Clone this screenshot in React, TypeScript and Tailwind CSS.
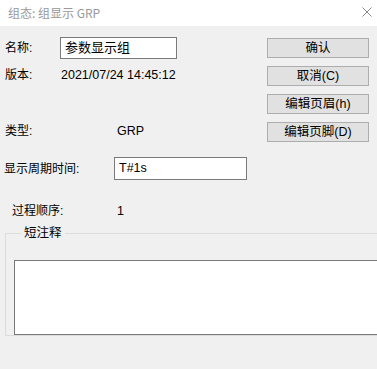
import React from "react";

const font = { fontFamily: '"Liberation Sans", "Noto Sans CJK SC", sans-serif' };

function DlgButton({ label }: { label: string }) {
  return (
    <button className="h-[20px] w-[102px] border border-[#adadad] bg-[#e1e1e1] text-[12.5px] leading-none text-black">
      {label}
    </button>
  );
}

export default function App() {
  return (
    <div
      className="w-[377px] h-[369px] overflow-hidden bg-[#f0f0f0] text-[12px] text-black"
      style={font}
    >
      {/* title bar */}
      <div className="flex h-[26px] items-center justify-between bg-white pl-[8px] pr-[5px]">
        <span className="text-[12px] text-[#999999]" style={{ fontFamily: '"Noto Sans CJK SC", sans-serif' }}>
          组态: 组显示 GRP
        </span>
        <svg width="10" height="10" viewBox="0 0 10 10" className="mb-[2px]">
          <path d="M0.5 0.5 L9.5 9.5 M9.5 0.5 L0.5 9.5" stroke="#8a8a8a" strokeWidth="1" />
        </svg>
      </div>

      <div className="flex">
        {/* left form */}
        <div className="w-[267px]">
          <div className="mt-[11px] flex h-[22px] items-center">
            <span className="w-[60px] shrink-0 pl-[5px]">名称:</span>
            <div className="flex h-[22px] w-[117px] items-center border border-[#7a7a7a] bg-white pl-[4px] text-[13px]">
              参数显示组
            </div>
          </div>
          <div className="mt-[5px] flex h-[22px] items-center">
            <span className="w-[61px] shrink-0 pl-[5px]">版本:</span>
            <span className="text-[12.5px]">2021/07/24 14:45:12</span>
          </div>
          <div className="mt-[34px] flex h-[22px] items-center">
            <span className="w-[117px] shrink-0 pl-[5px]">类型:</span>
            <span className="text-[12.5px]">GRP</span>
          </div>
          <div className="mt-[15px] flex h-[23px] items-center">
            <span className="w-[114px] shrink-0 pl-[4px]">显示周期时间:</span>
            <div className="flex h-[23px] w-[133px] items-center border border-[#7a7a7a] bg-white pl-[4px] text-[12.5px]">
              T#1s
            </div>
          </div>
          <div className="mt-[20px] flex h-[22px] items-center">
            <span className="w-[117px] shrink-0 pl-[12px]">过程顺序:</span>
            <span className="text-[12.5px]">1</span>
          </div>
        </div>

        {/* right buttons */}
        <div className="mt-[12px] flex flex-col gap-[8px]">
          <DlgButton label="确认" />
          <DlgButton label="取消(C)" />
          <DlgButton label="编辑页眉(h)" />
          <DlgButton label="编辑页脚(D)" />
        </div>
      </div>

      {/* short comment group */}
      <fieldset className="mt-[3px] ml-[5px] w-[400px] border border-[#dcdcdc] pb-0 pl-[8px]">
        <legend className="ml-[7px] px-[3px] text-[12.5px] leading-[16px]">短注释</legend>
        <textarea className="mt-[19px] block h-[75px] w-[390px] resize-none border border-[#7a7a7a] bg-white outline-none" />
      </fieldset>
    </div>
  );
}
